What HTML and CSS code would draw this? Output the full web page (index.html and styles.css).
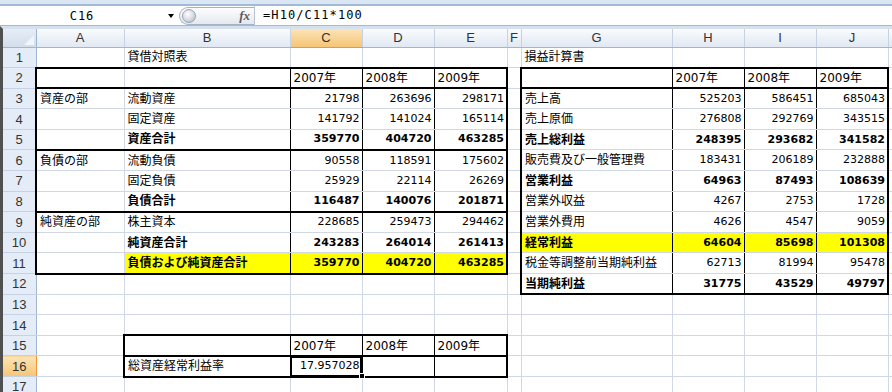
FILE: index.html
```html
<!DOCTYPE html>
<html lang="ja">
<head>
<meta charset="UTF-8">
<meta name="viewport" content="width=device-width, initial-scale=1.0">
<title>貸借対照表・損益計算書</title>
<link rel="stylesheet" href="styles.css">
</head>
<body>
    <div class="ribbon-edge"></div>
    <div class="formula-bar">
        <div class="name-box">
            <span class="cell-ref">C16</span>
            <span class="drop-arrow"></span>
        </div>
        <div class="fx-box">
            <span class="knob"></span>
            <span class="fx">fx</span>
        </div>
        <div class="formula">=H10/C11*100</div>
    </div>

    <div class="sheet-wrap">
        <table class="sheet">
            <colgroup>
                <col class="c-rh">
                <col class="c-a">
                <col class="c-b">
                <col class="c-num">
                <col class="c-num">
                <col class="c-e">
                <col class="c-f">
                <col class="c-g">
                <col class="c-num">
                <col class="c-num">
                <col class="c-num">
                <col class="c-num">
            </colgroup>
            <thead>
                <tr class="col-head">
                    <th class="corner"></th>
                    <th>A</th>
                    <th>B</th>
                    <th class="sel">C</th>
                    <th>D</th>
                    <th>E</th>
                    <th>F</th>
                    <th>G</th>
                    <th>H</th>
                    <th>I</th>
                    <th>J</th>
                    <th></th>
                </tr>
            </thead>
            <tbody>
                <tr>
                    <th class="rh">1</th>
                    <td></td><td>貸借対照表</td><td></td><td></td><td></td><td></td>
                    <td>損益計算書</td><td></td><td></td><td></td><td></td>
                </tr>
                <tr>
                    <th class="rh">2</th>
                    <td class="t l b"></td>
                    <td class="t b vr"></td>
                    <td class="t b vl vr">2007年</td>
                    <td class="t b vl vr">2008年</td>
                    <td class="t b vl r">2009年</td>
                    <td></td>
                    <td class="t l b vr"></td>
                    <td class="t b vl vr">2007年</td>
                    <td class="t b vl vr">2008年</td>
                    <td class="t b vl r">2009年</td>
                    <td></td>
                </tr>
                <tr>
                    <th class="rh">3</th>
                    <td class="l">資産の部</td>
                    <td class="vr">流動資産</td>
                    <td class="vl vr num">21798</td>
                    <td class="vl vr num">263696</td>
                    <td class="vl r num">298171</td>
                    <td></td>
                    <td class="l vr">売上高</td>
                    <td class="vl vr num">525203</td>
                    <td class="vl vr num">586451</td>
                    <td class="vl r num">685043</td>
                    <td></td>
                </tr>
                <tr>
                    <th class="rh">4</th>
                    <td class="l"></td>
                    <td class="vr">固定資産</td>
                    <td class="vl vr num">141792</td>
                    <td class="vl vr num">141024</td>
                    <td class="vl r num">165114</td>
                    <td></td>
                    <td class="l vr">売上原価</td>
                    <td class="vl vr num">276808</td>
                    <td class="vl vr num">292769</td>
                    <td class="vl r num">343515</td>
                    <td></td>
                </tr>
                <tr>
                    <th class="rh">5</th>
                    <td class="l b"></td>
                    <td class="vr b bold">資産合計</td>
                    <td class="vl vr b num bold">359770</td>
                    <td class="vl vr b num bold">404720</td>
                    <td class="vl r b num bold">463285</td>
                    <td></td>
                    <td class="l vr bold">売上総利益</td>
                    <td class="vl vr num bold">248395</td>
                    <td class="vl vr num bold">293682</td>
                    <td class="vl r num bold">341582</td>
                    <td></td>
                </tr>
                <tr>
                    <th class="rh">6</th>
                    <td class="l">負債の部</td>
                    <td class="vr">流動負債</td>
                    <td class="vl vr num">90558</td>
                    <td class="vl vr num">118591</td>
                    <td class="vl r num">175602</td>
                    <td></td>
                    <td class="l vr">販売費及び一般管理費</td>
                    <td class="vl vr num">183431</td>
                    <td class="vl vr num">206189</td>
                    <td class="vl r num">232888</td>
                    <td></td>
                </tr>
                <tr>
                    <th class="rh">7</th>
                    <td class="l"></td>
                    <td class="vr">固定負債</td>
                    <td class="vl vr num">25929</td>
                    <td class="vl vr num">22114</td>
                    <td class="vl r num">26269</td>
                    <td></td>
                    <td class="l vr bold">営業利益</td>
                    <td class="vl vr num bold">64963</td>
                    <td class="vl vr num bold">87493</td>
                    <td class="vl r num bold">108639</td>
                    <td></td>
                </tr>
                <tr>
                    <th class="rh">8</th>
                    <td class="l b"></td>
                    <td class="vr b bold">負債合計</td>
                    <td class="vl vr b num bold">116487</td>
                    <td class="vl vr b num bold">140076</td>
                    <td class="vl r b num bold">201871</td>
                    <td></td>
                    <td class="l vr">営業外収益</td>
                    <td class="vl vr num">4267</td>
                    <td class="vl vr num">2753</td>
                    <td class="vl r num">1728</td>
                    <td></td>
                </tr>
                <tr>
                    <th class="rh">9</th>
                    <td class="l">純資産の部</td>
                    <td class="vr">株主資本</td>
                    <td class="vl vr num">228685</td>
                    <td class="vl vr num">259473</td>
                    <td class="vl r num">294462</td>
                    <td></td>
                    <td class="l vr">営業外費用</td>
                    <td class="vl vr num">4626</td>
                    <td class="vl vr num">4547</td>
                    <td class="vl r num">9059</td>
                    <td></td>
                </tr>
                <tr>
                    <th class="rh">10</th>
                    <td class="l"></td>
                    <td class="vr bold">純資産合計</td>
                    <td class="vl vr num bold">243283</td>
                    <td class="vl vr num bold">264014</td>
                    <td class="vl r num bold">261413</td>
                    <td></td>
                    <td class="l vr bold hl">経常利益</td>
                    <td class="vl vr num bold hl">64604</td>
                    <td class="vl vr num bold hl">85698</td>
                    <td class="vl r num bold hl">101308</td>
                    <td></td>
                </tr>
                <tr>
                    <th class="rh">11</th>
                    <td class="l b"></td>
                    <td class="vr b bold hl">負債および純資産合計</td>
                    <td class="vl vr b num bold hl">359770</td>
                    <td class="vl vr b num bold hl">404720</td>
                    <td class="vl r b num bold hl">463285</td>
                    <td></td>
                    <td class="l vr">税金等調整前当期純利益</td>
                    <td class="vl vr num">62713</td>
                    <td class="vl vr num">81994</td>
                    <td class="vl r num">95478</td>
                    <td></td>
                </tr>
                <tr>
                    <th class="rh">12</th>
                    <td></td><td></td><td></td><td></td><td></td><td></td>
                    <td class="l vr b bold">当期純利益</td>
                    <td class="vl vr b num bold">31775</td>
                    <td class="vl vr b num bold">43529</td>
                    <td class="vl r b num bold">49797</td>
                    <td></td>
                </tr>
                <tr>
                    <th class="rh">13</th>
                    <td></td><td></td><td></td><td></td><td></td><td></td>
                    <td></td><td></td><td></td><td></td><td></td>
                </tr>
                <tr>
                    <th class="rh">14</th>
                    <td></td><td></td><td></td><td></td><td></td><td></td>
                    <td></td><td></td><td></td><td></td><td></td>
                </tr>
                <tr>
                    <th class="rh">15</th>
                    <td></td>
                    <td class="t l b vr"></td>
                    <td class="t b vl vr">2007年</td>
                    <td class="t b vl vr">2008年</td>
                    <td class="t b vl r">2009年</td>
                    <td></td><td></td><td></td><td></td><td></td><td></td>
                </tr>
                <tr>
                    <th class="rh sel">16</th>
                    <td></td>
                    <td class="l b vr">総資産経常利益率</td>
                    <td class="vl vr b num active">17.957028<span class="handle"></span></td>
                    <td class="vl vr b"></td>
                    <td class="vl r b"></td>
                    <td></td><td></td><td></td><td></td><td></td><td></td>
                </tr>
                <tr>
                    <th class="rh">17</th>
                    <td></td><td></td><td></td><td></td><td></td><td></td>
                    <td></td><td></td><td></td><td></td><td></td>
                </tr>
            </tbody>
        </table>
    </div>
</body>
</html>
```

FILE: styles.css
```css
body {
    margin: 0;
    width: 892px;
    height: 392px;
    overflow: hidden;
    background-color: #fff;
    font-family: "DejaVu Sans", "Noto Sans CJK JP", sans-serif;
    color: #000;
}

/* bottom edge of the ribbon */
.ribbon-edge {
    height: 4px;
    background-color: #dae6f3;
    border-bottom: 2px solid #a3bad6;
}

.formula-bar {
    display: flex;
    align-items: center;
    height: 19px;
    background-color: #fff;
    border-bottom: 1px solid #a9b8cb;
}

.name-box {
    display: flex;
    align-items: center;
    width: 179px;
    height: 100%;
}

.cell-ref {
    width: 164px;
    text-align: center;
    font-family: "DejaVu Sans Mono", monospace;
    font-size: 12px;
    letter-spacing: 1px;
}

.drop-arrow {
    width: 0;
    height: 0;
    margin-left: 4px;
    border-left: 3.5px solid transparent;
    border-right: 3.5px solid transparent;
    border-top: 4px solid #000;
}

.fx-box {
    display: flex;
    align-items: center;
    justify-content: space-between;
    box-sizing: border-box;
    width: 75px;
    height: 18px;
    padding: 0 4px 0 2px;
    border: 1px solid #a6b3c4;
    border-right: none;
    border-radius: 9px 0 0 9px;
    background: linear-gradient(#fdfdfe, #e4e9ef);
}

.knob {
    width: 12px;
    height: 12px;
    border-radius: 50%;
    border: 1px solid #9aa5b2;
    background: radial-gradient(circle at 40% 35%, #fff, #d3d9e0 55%, #a7b1bc);
}

.fx {
    font-family: "Liberation Serif", serif;
    font-style: italic;
    font-weight: bold;
    font-size: 13px;
    color: #5c5c5c;
}

.formula {
    height: 100%;
    padding-left: 8px;
    border-left: 1px solid #b7c3d2;
    font-family: "DejaVu Sans Mono", monospace;
    font-size: 12px;
    letter-spacing: 1.1px;
    line-height: 19px;
}

/* sheet */
.sheet-wrap {
    height: 363px;
    overflow: hidden;
    border-top: 3px solid #d5e1ef;
    border-left: 3px solid #505050;
}

.sheet {
    width: 957px;
    border-collapse: collapse;
    table-layout: fixed;
}

.c-rh { width: 33px; }
.c-a { width: 88px; }
.c-b { width: 166px; }
.c-num { width: 72px; }
.c-e { width: 73px; }
.c-f { width: 14px; }
.c-g { width: 151px; }

.sheet thead tr {
    height: 18px;
}

.sheet tbody tr {
    height: 20.6px;
}

.col-head th {
    padding: 0;
    font-family: "Liberation Sans", sans-serif;
    font-size: 13px;
    font-weight: normal;
    color: #333;
    background: linear-gradient(#f9fbfd, #e1e8f2);
    border-right: 1px solid #c5d2e3;
    border-bottom: 1px solid #9eb6ce;
}

.col-head .corner {
    position: relative;
    background: linear-gradient(#e6edf6, #d3deeb);
    border-right: 1px solid #9eb6ce;
}

.col-head .corner::after {
    content: "";
    position: absolute;
    right: 2px;
    bottom: 2px;
    border-left: 10px solid transparent;
    border-bottom: 10px solid #f2f5f9;
}

.sheet .rh {
    padding: 0;
    font-family: "Liberation Sans", sans-serif;
    font-size: 13px;
    font-weight: normal;
    color: #333;
    text-align: center;
    background-color: #e4ecf7;
    border-right: 1px solid #9eb6ce;
    border-bottom: 1px solid #c5d2e3;
}

.col-head .sel {
    background: linear-gradient(#fbe3b6, #f6c576);
    border-bottom: 1px solid #f29536;
}

.sheet .rh.sel {
    background: linear-gradient(#fbe3b6, #f6c576);
    border-right: 1px solid #f29536;
}

.sheet td {
    padding: 0 2px 0 3px;
    border: 1px solid #d0d7e5;
    font-size: 12px;
    line-height: 14px;
    white-space: nowrap;
    overflow: hidden;
    vertical-align: middle;
}

.sheet .num {
    text-align: right;
    font-size: 11px;
}

.sheet .bold {
    font-weight: bold;
}

.sheet .hl {
    background-color: #ffff00;
}

/* thin black rules inside the tables */
.sheet .vl { border-left: 1px solid #000; }
.sheet .vr { border-right: 1px solid #000; }

/* thick outline rules */
.sheet .t { border-top: 2px solid #000; }
.sheet .b { border-bottom: 2px solid #000; }
.sheet .l { border-left: 2px solid #000; }
.sheet .r { border-right: 2px solid #000; }

.sheet .active {
    position: relative;
    overflow: visible;
    outline: 2px solid #000;
    outline-offset: -2px;
}

.handle {
    position: absolute;
    right: -3px;
    bottom: -3px;
    width: 4px;
    height: 4px;
    background-color: #000;
    border: 1px solid #fff;
}
```
